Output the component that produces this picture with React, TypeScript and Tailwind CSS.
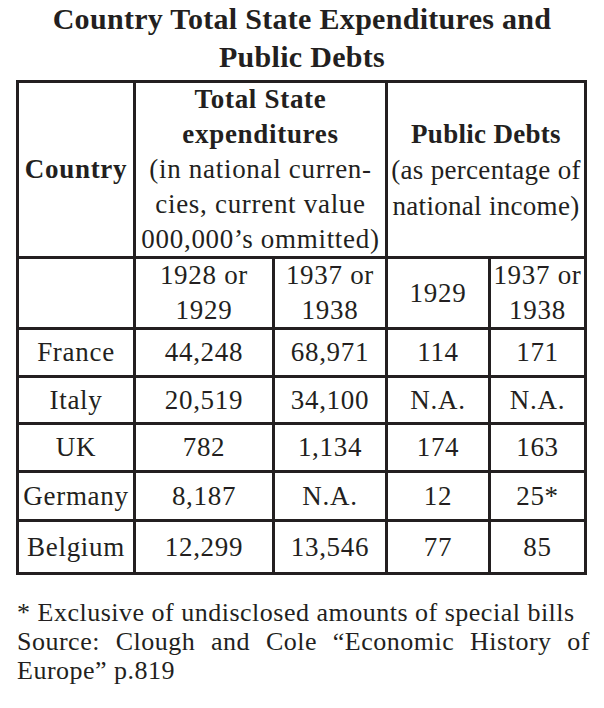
import React from "react"

const rows = [
    ["France", "44,248", "68,971", "114", "171"],
    ["Italy", "20,519", "34,100", "N.A.", "N.A."],
    ["UK", "782", "1,134", "174", "163"],
    ["Germany", "8,187", "N.A.", "12", "25*"],
    ["Belgium", "12,299", "13,546", "77", "85"],
]

const cell = "bg-white flex items-center justify-center text-center whitespace-nowrap"

export default function App() {
    return (
        <div className="w-[604px] h-[708px] bg-white text-[#231f20] font-['Liberation_Serif',serif]">
            <h1 className="text-center font-bold text-[30px] leading-[38px] tracking-[0.3px]">
                Country Total State Expenditures and
                <br />
                Public Debts
            </h1>

            <div className="ml-[16px] mt-[4px] w-[571px] grid grid-cols-[114px_136px_110px_100px_93px] grid-rows-[173px_68px_45px_44px_45px_46px_50px] gap-[3px] border-[3px] border-[#231f20] bg-[#231f20] text-[27px] tracking-[0.7px]">
                <div className={cell + " font-bold"}>Country</div>
                <div className={cell + " col-span-2 flex-col leading-[35px]"}>
                    <span className="font-bold">Total State</span>
                    <span className="font-bold">expenditures</span>
                    <span>(in national curren-</span>
                    <span>cies, current value</span>
                    <span>000,000’s ommitted)</span>
                </div>
                <div className={cell + " col-span-2 flex-col leading-[36px] tracking-[0.3px]"}>
                    <span className="font-bold">Public Debts</span>
                    <span>(as percentage of</span>
                    <span>national income)</span>
                </div>

                <div className={cell}></div>
                <div className={cell + " flex-col leading-[35px]"}><span>1928 or</span><span>1929</span></div>
                <div className={cell + " flex-col leading-[35px]"}><span>1937 or</span><span>1938</span></div>
                <div className={cell}>1929</div>
                <div className={cell + " flex-col leading-[35px]"}><span>1937 or</span><span>1938</span></div>

                {rows.map((r) =>
                    r.map((v, i) => (
                        <div key={r[0] + i} className={cell}>{v}</div>
                    ))
                )}
            </div>

            <div className="ml-[17px] mt-[23px] w-[573px] text-[26px] leading-[29px] tracking-[0.5px]">
                <div>* Exclusive of undisclosed amounts of special bills</div>
                <div className="text-justify [text-align-last:justify]">Source: Clough and Cole “Economic History of</div>
                <div>Europe” p.819</div>
            </div>
        </div>
    )
}
